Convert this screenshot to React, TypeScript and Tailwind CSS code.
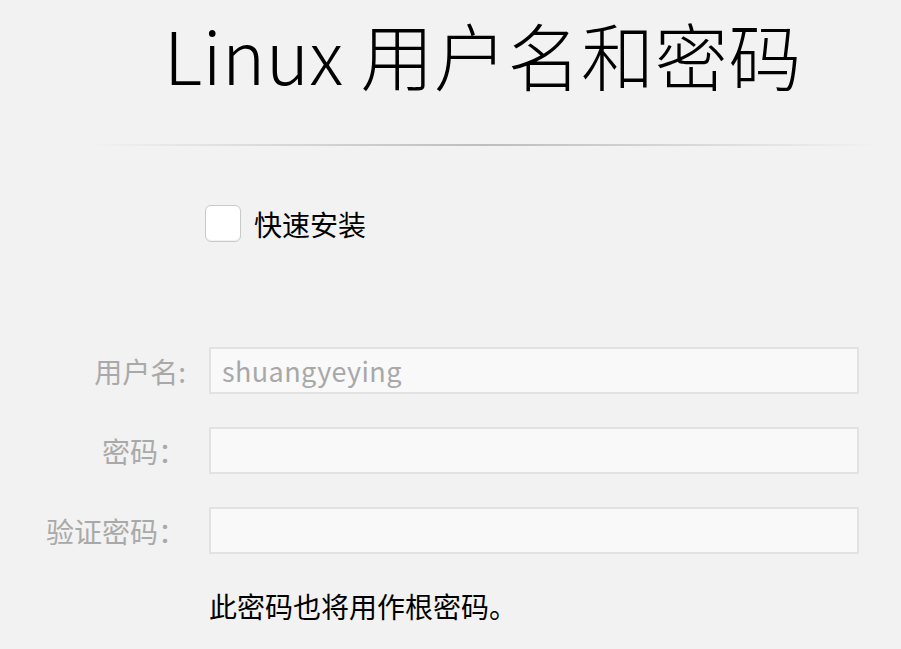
import { useState } from "react";

const FONT = "font-['Noto_Sans_CJK_SC','Noto_Sans',sans-serif]";

/**
 * One labelled input row
 */
function FieldRow({ label, value, type = "text" }: { label: string; value?: string; type?: string }) {
  return (
    <div className="flex items-center h-[47px]">
      <span className="w-[186px] shrink-0 text-right text-[28px] text-[#a9a9a9] leading-none whitespace-nowrap">{label}</span>
      <input
        type={type}
        defaultValue={value}
        className="ml-[23px] w-[650px] h-[47px] bg-[#f9f9f9] border-2 border-[#e2e2e2] px-[11px] text-[27px] text-[#a8a8a8] outline-none tracking-[0.4px]"
      />
    </div>
  );
}

export default function App() {
  const [quick, setQuick] = useState(false);

  return (
    <div className={`w-[901px] h-[649px] bg-[#f2f2f2] overflow-hidden text-black ${FONT}`}>
      {/* Title */}
      <h1 className="pl-[164px] pt-[11px] text-[73px] leading-[84px] font-light tracking-[0.6px]">
        Linux 用户名和密码
      </h1>

      {/* Divider */}
      <div className="ml-[88px] mt-[49px] w-[792px] h-[2px] bg-gradient-to-r from-transparent via-[#bdbdbd] to-transparent" />

      {/* Quick install */}
      <label className="flex items-center ml-[205px] mt-[59px] gap-[13px] cursor-pointer">
        <span
          onClick={() => setQuick(!quick)}
          className="w-[36px] h-[37px] rounded-[6px] bg-white border border-[#c9c9c9] shadow-[inset_0_-1px_1px_rgba(0,0,0,0.06)]"
        />
        <span className="text-[28px] leading-none">快速安装</span>
      </label>

      {/* Fields */}
      <div className="mt-[105px] flex flex-col gap-[33px]">
        <FieldRow label="用户名:" value="shuangyeying" />
        <FieldRow label="密码：" type="password" />
        <FieldRow label="验证密码：" type="password" />
      </div>

      <p className="ml-[209px] mt-[38px] text-[28px] leading-none">此密码也将用作根密码。</p>
    </div>
  );
}
